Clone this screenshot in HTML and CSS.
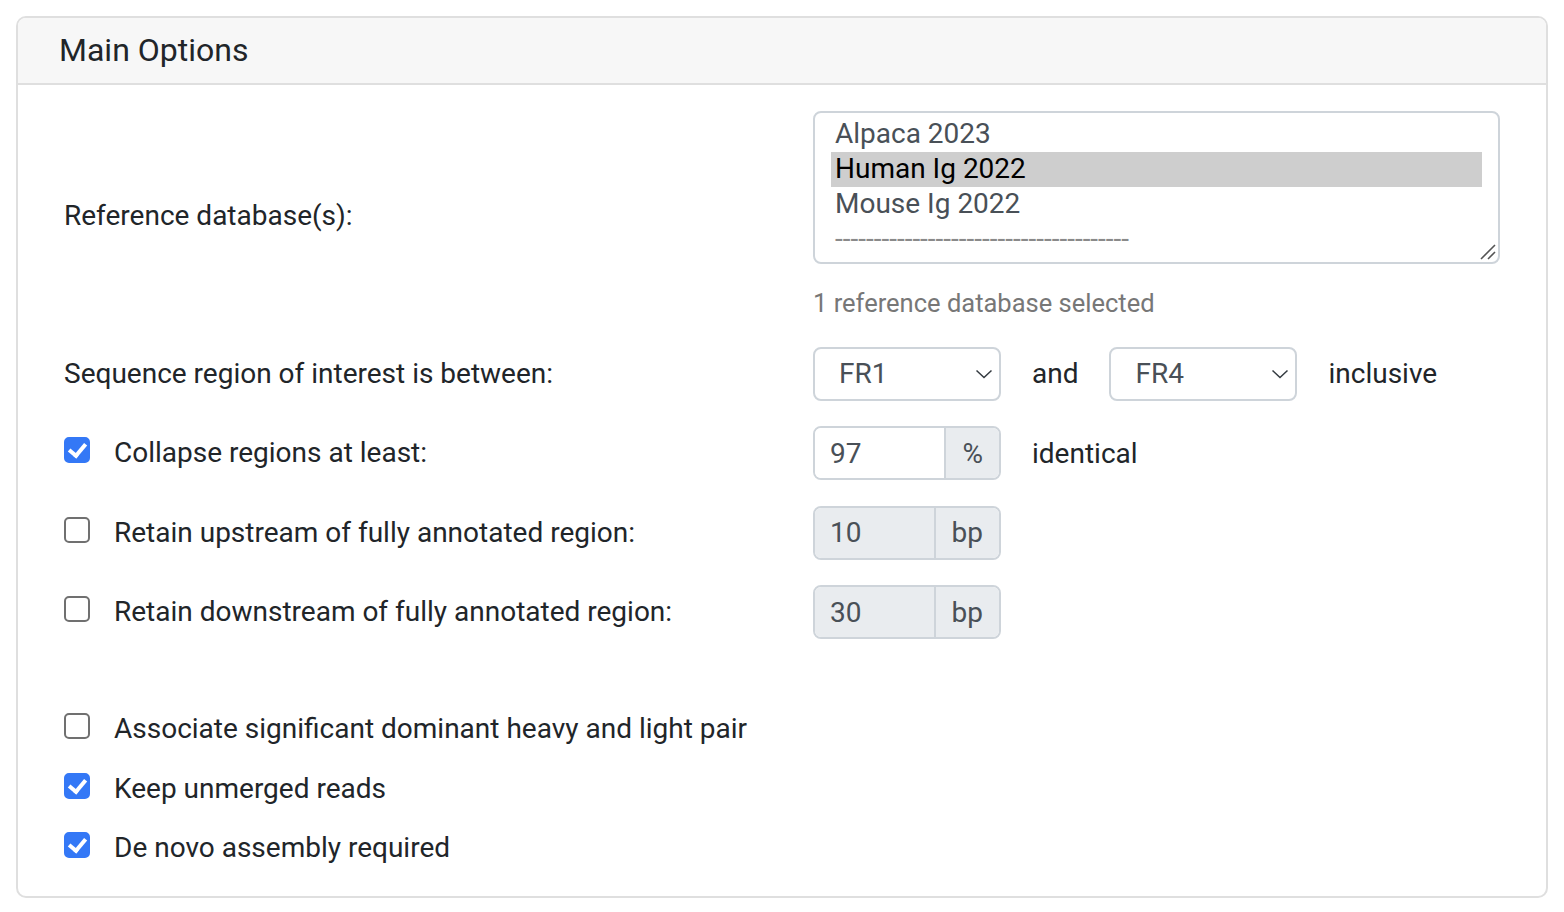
FILE: index.html
```html
<!DOCTYPE html>
<html lang="en">
  <head>
    <meta charset="UTF-8" />
    <meta name="viewport" content="width=device-width, initial-scale=1.0" />
    <title>Main Options</title>
    <link rel="stylesheet" href="styles.css">
  </head>
  <body>
    <div class="card">
      <div class="card-header">Main Options</div>
      <div class="card-body">

        <div class="form-row">
          <label class="row-label" for="refdb">Reference database(s):</label>
          <div class="row-control">
            <div class="list-wrap">
              <select class="db-list" id="refdb" multiple>
                <option>Alpaca 2023</option>
                <option selected>Human Ig 2022</option>
                <option>Mouse Ig 2022</option>
                <option class="divider" disabled>--------------------------------------</option>
                <option>Rabbit Ig 2021</option>
                <option>Rat Ig 2021</option>
              </select>
              <svg class="grip" width="18" height="18" viewBox="0 0 18 18"><path d="M2 16L16 2M9 16l7-7" fill="none" stroke="#555" stroke-width="1.6"/></svg>
            </div>
            <div class="help-text">1 reference database selected</div>
          </div>
        </div>

        <div class="form-row">
          <label class="row-label">Sequence region of interest is between:</label>
          <div class="row-control inline">
            <div class="select-wrap">
              <select class="region-select">
                <option selected>FR1</option>
                <option>CDR1</option>
                <option>FR2</option>
                <option>CDR2</option>
                <option>FR3</option>
                <option>CDR3</option>
                <option>FR4</option>
              </select>
              <svg class="chevron" width="18" height="10" viewBox="0 0 18 10"><path d="M1.5 1.5l7.5 7 7.5-7" fill="none" stroke="#343a40" stroke-width="1.5"/></svg>
            </div>
            <span class="word">and</span>
            <div class="select-wrap">
              <select class="region-select">
                <option>FR1</option>
                <option>CDR1</option>
                <option>FR2</option>
                <option>CDR2</option>
                <option>FR3</option>
                <option>CDR3</option>
                <option selected>FR4</option>
              </select>
              <svg class="chevron" width="18" height="10" viewBox="0 0 18 10"><path d="M1.5 1.5l7.5 7 7.5-7" fill="none" stroke="#343a40" stroke-width="1.5"/></svg>
            </div>
            <span class="word">inclusive</span>
          </div>
        </div>

        <div class="form-row">
          <label class="row-label check">
            <input type="checkbox" checked>
            <span>Collapse regions at least:</span>
          </label>
          <div class="row-control inline">
            <div class="input-group">
              <input class="num-input" type="text" value="97">
              <span class="addon">%</span>
            </div>
            <span class="word">identical</span>
          </div>
        </div>

        <div class="form-row">
          <label class="row-label check">
            <input type="checkbox">
            <span>Retain upstream of fully annotated region:</span>
          </label>
          <div class="row-control inline">
            <div class="input-group">
              <input class="num-input" type="text" value="10" disabled>
              <span class="addon">bp</span>
            </div>
          </div>
        </div>

        <div class="form-row">
          <label class="row-label check">
            <input type="checkbox">
            <span>Retain downstream of fully annotated region:</span>
          </label>
          <div class="row-control inline">
            <div class="input-group">
              <input class="num-input" type="text" value="30" disabled>
              <span class="addon">bp</span>
            </div>
          </div>
        </div>

        <div class="extra-options">
          <label class="row-label check">
            <input type="checkbox">
            <span>Associate significant dominant heavy and light pair</span>
          </label>
          <label class="row-label check">
            <input type="checkbox" checked>
            <span>Keep unmerged reads</span>
          </label>
          <label class="row-label check">
            <input type="checkbox" checked>
            <span>De novo assembly required</span>
          </label>
        </div>

      </div>
    </div>
  </body>
</html>
```

FILE: styles.css
```css
body {
  margin: 16px;
  font-family: Roboto, "Liberation Sans", sans-serif;
  color: #212529;
  background-color: #fff;
}

.card {
  border: 2px solid #dfdfdf;
  border-radius: 10px;
  overflow: hidden;
}

.card-header {
  background-color: #f7f7f7;
  border-bottom: 2px solid #dfdfdf;
  height: 65px;
  line-height: 65px;
  padding-left: 41px;
  font-size: 32px;
}

.card-body {
  padding: 26px 46px 28px 46px;
}

.form-row {
  display: grid;
  grid-template-columns: 749px 1fr;
  align-items: center;
  margin-bottom: 25.5px;
}

.row-label {
  font-size: 28px;
  line-height: 40px;
}

.row-label.check {
  display: flex;
  align-items: center;
  gap: 24px;
}

.row-control.inline {
  display: flex;
  align-items: center;
  gap: 31px;
}

.word {
  font-size: 28px;
}

/* checkboxes */
.check input {
  appearance: none;
  -webkit-appearance: none;
  width: 26px;
  height: 26px;
  margin: 0 0 6px 0;
  border: 2px solid #707070;
  border-radius: 5px;
  background-color: #fff;
  position: relative;
  flex-shrink: 0;
}

.check input:checked {
  background-color: #3478f6;
  border-color: #3478f6;
}

.check input:checked::after {
  content: "";
  position: absolute;
  left: 6px;
  top: 1px;
  width: 7px;
  height: 13px;
  border: solid #fff;
  border-width: 0 4px 4px 0;
  transform: rotate(40deg);
}

/* reference db list */
.list-wrap {
  position: relative;
}

.db-list {
  display: block;
  width: 100%;
  height: 153px;
  box-sizing: border-box;
  border: 2px solid #ced4da;
  border-radius: 8px;
  padding: 4px 16px;
  font-family: Roboto, "Liberation Sans", sans-serif;
  font-size: 28px;
  color: #495057;
  background-color: #fff;
  overflow-y: hidden;
  outline: none;
}

.db-list option {
  box-sizing: border-box;
  padding: 0 4px;
  height: 35px;
  line-height: 35px;
}

.db-list option:checked {
  background: #cecece linear-gradient(#cecece, #cecece);
  color: #000;
}

.db-list option.divider {
  color: #8a8a8a;
}

.grip {
  position: absolute;
  right: 3px;
  bottom: 3px;
  pointer-events: none;
}

.help-text {
  margin-top: 21px;
  font-size: 25.5px;
  line-height: 36px;
  color: #777;
}

/* region selects */
.select-wrap {
  position: relative;
  width: 188px;
}

.region-select {
  appearance: none;
  -webkit-appearance: none;
  display: block;
  width: 100%;
  height: 54px;
  box-sizing: border-box;
  border: 2px solid #ced4da;
  border-radius: 8px;
  padding: 0 40px 0 24px;
  font-family: Roboto, "Liberation Sans", sans-serif;
  font-size: 28px;
  color: #495057;
  background-color: #fff;
}

.chevron {
  position: absolute;
  right: 8px;
  top: 22px;
  pointer-events: none;
}

/* input groups */
.input-group {
  display: flex;
  width: 188px;
  height: 54px;
  box-sizing: border-box;
  border: 2px solid #ced4da;
  border-radius: 8px;
  overflow: hidden;
}

.num-input {
  flex: 1;
  min-width: 0;
  border: none;
  padding: 0 0 0 15px;
  font-family: Roboto, "Liberation Sans", sans-serif;
  font-size: 28px;
  color: #495057;
  background-color: #fff;
  outline: none;
}

.num-input:disabled {
  background-color: #e9ecef;
  color: #495057;
}

.addon {
  display: flex;
  align-items: center;
  padding: 0 16px;
  border-left: 2px solid #ced4da;
  background-color: #e9ecef;
  font-size: 28px;
  color: #495057;
}

.extra-options {
  margin-top: 70px;
  display: flex;
  flex-direction: column;
  gap: 19.5px;
}
```
